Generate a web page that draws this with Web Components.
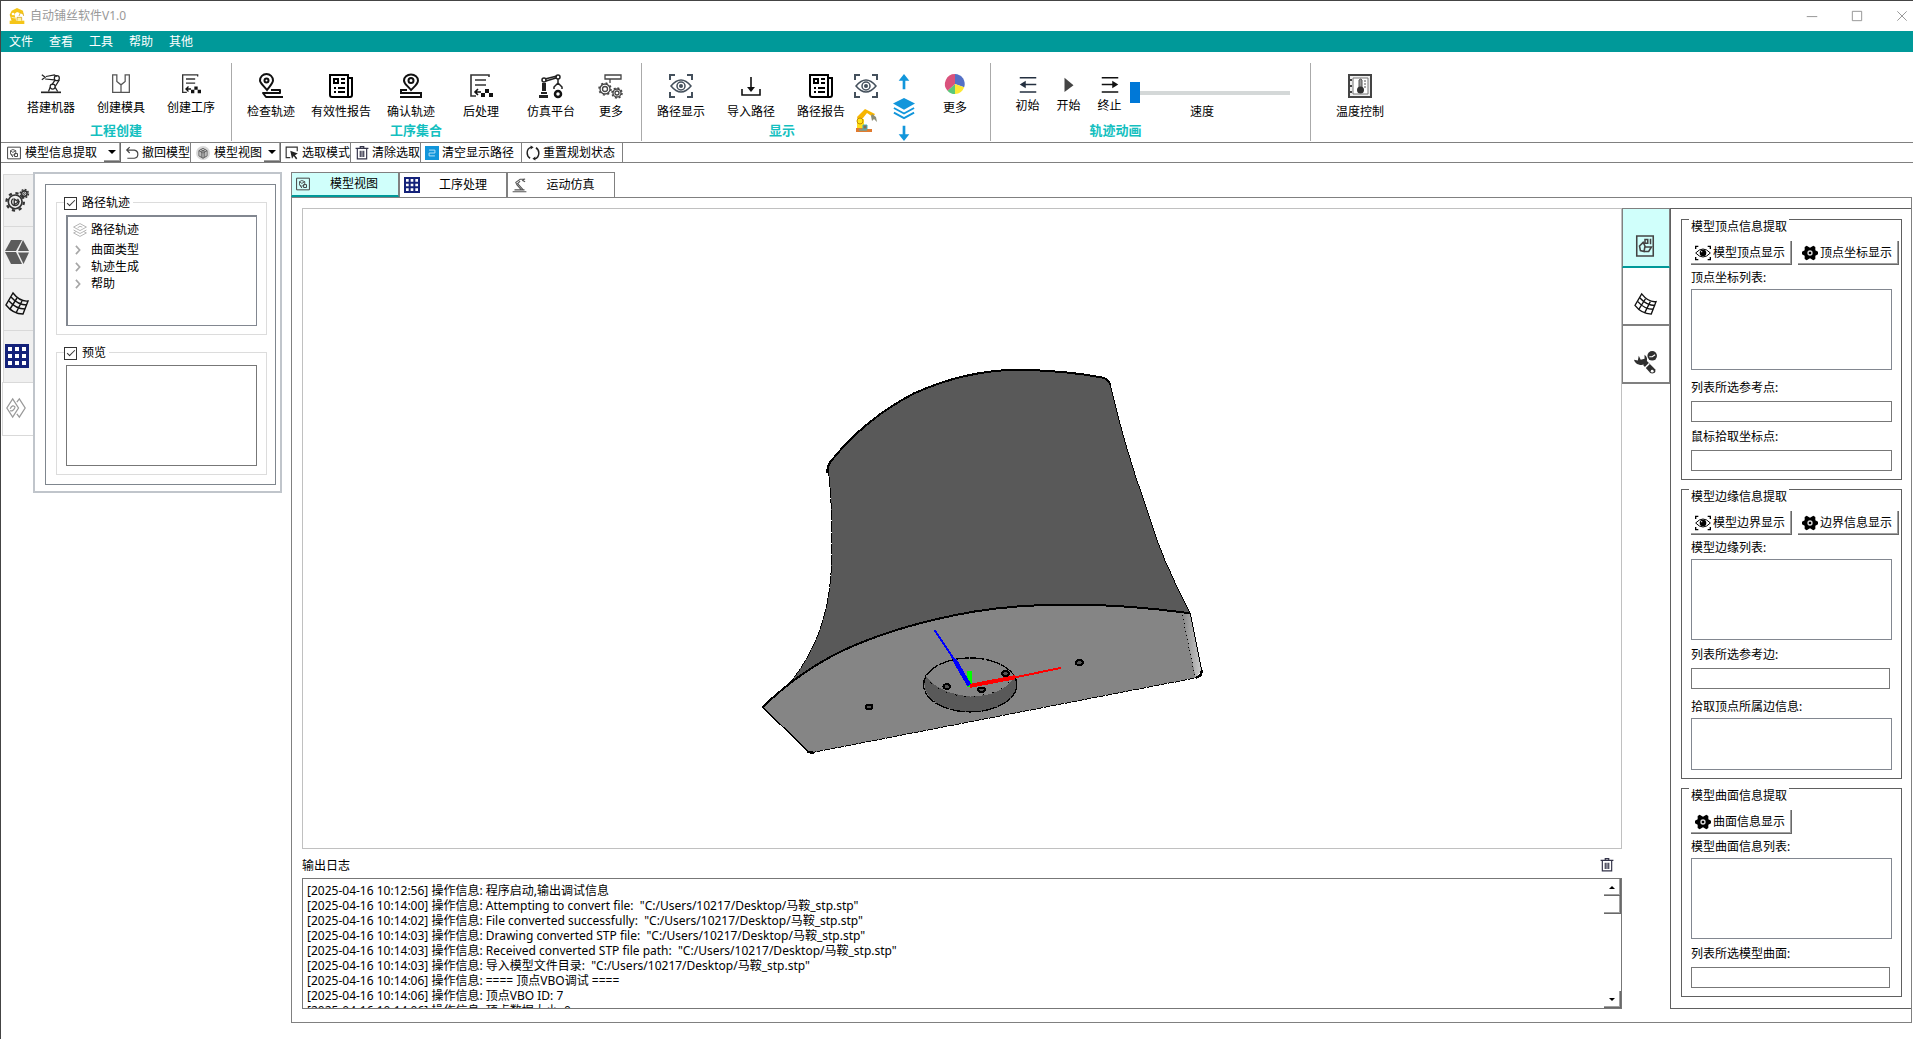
<!DOCTYPE html>
<html lang="zh-CN">
<head>
<meta charset="utf-8">
<title>自动铺丝软件V1.0</title>
<style>
html, body {
  margin: 0;
  height: 100%;
}
body {
  font-family: "Noto Sans", "Noto Sans CJK SC", sans-serif;
  font-size: 12px;
  line-height: 16px;
  color: #000;
  background: #fff;
}
</style>
</head>
<body>
<app-window></app-window>

<script>
// every icon is drawn on a 24 x 24 grid
const ICONS = {
  logo: `<g fill="#f5c518"><path d="M1 19h22v5H1z"/><path d="M4 20L1 10l3-6 8-4 9 4 1 6-5-2-5-2-4 3 3 11z"/></g><path d="M12 19v-5h7v5M17 7l-2 5M21 8l1 4" fill="#fff3a0" stroke="#c8960c"/><circle cx="6" cy="9" r="2" fill="#fff"/><path d="M4 14l5 1" stroke="#fff"/>`,
  robot: `<g fill="none" stroke="#222" stroke-width="1.500"><path d="M1 1l4 3-4 3M6 3l10-2 3 2M5 6l11 1"/><circle cx="19" cy="5" r="3"/><path d="M17 7l-4 6M22 7l-5 8"/><circle cx="14" cy="15" r="3"/><path d="M11 16l-2 5M17 16l3 5"/></g><path d="M0 21h24v2H0z" fill="#222"/>`,
  mold: `<g fill="none" stroke="#555" stroke-width="1.500"><path d="M2 1h5v8l5 4 5-4V1h5v21H2zM12 13v9"/></g>`,
  process: `<g fill="none" stroke="#333" stroke-width="1.600"><path d="M20 3V1H2v21h5M6 6h11M6 11h11"/><path d="M6 18h6M9 15l-3 3 3 3" stroke="#111"/></g><path d="M12 19h4v4h-4zM20 19h4v4h-4zM16 15h4v4h-4z" fill="#111"/>`,
  checkpath: `<g fill="none" stroke="#111" stroke-width="2"><path d="M8 16C4 11 1 9 1 6.500a6 6 0 0 1 13 0C14 9 11 12 8 16z"/><circle cx="7.500" cy="6.500" r="2"/><path d="M12 16h9v3H4l3 4h17" stroke-linejoin="round"/></g>`,
  confirmpath: `<g fill="none" stroke="#111" stroke-width="2"><path d="M12 16C8 11 5 10 5 6.500a7 6 0 0 1 14 0C19 10 16 12 12 16z"/><circle cx="12" cy="6.500" r="2.500"/><path d="M8 16H2v3h20v4H1"/></g>`,
  report: `<g fill="none" stroke="#000" stroke-width="2"><path d="M1 1h18v22H3q-2 0-2-2zM19 4h4v17q0 2-2 2h-3"/><path d="M5 5h4v4H5zM12 5h4M12 9h4M5 14h2M9 14h7M5 18h2M9 18h7"/></g>`,
  platform: `<g fill="none" stroke="#222" stroke-width="1.500"><path d="M6 5l12-3M7 7l10-3"/><circle cx="5" cy="6" r="2"/><circle cx="19" cy="3" r="2"/><path d="M19 5v5M19 9l-4 4v2M19 9l4 4v2"/></g><path d="M2 18h6v2H2zM0 21h9v3H0zM3 9h4v8H3z" fill="#222"/><circle cx="19" cy="20" r="3" fill="none" stroke="#111" stroke-width="2.500"/>`,
  more: `<g fill="none" stroke="#444" stroke-width="1.300"><path d="M6 1h16v4H6zM11 5v4"/><circle cx="6" cy="15" r="5"/><circle cx="6" cy="15" r="6" stroke-dasharray="2 2.700" stroke-width="1.500"/><circle cx="6" cy="15" r="2.500"/><circle cx="18" cy="19" r="4"/><circle cx="18" cy="19" r="5" stroke-dasharray="2 1.900" stroke-width="1.500"/><circle cx="18" cy="19" r="2"/></g>`,
  eye: `<g fill="none" stroke="#44505c" stroke-width="1.500"><path d="M1 6V1h5M18 1h5v5M23 18v5h-5M6 23H1v-5" stroke-width="2"/><path d="M2 12q10-12 20 0-10 12-20 0z"/><circle cx="12" cy="12" r="4"/></g><circle cx="12" cy="12" r="2" fill="#44505c"/>`,
  eyedark: `<g fill="none" stroke="#000" stroke-width="2"><path d="M1 6V2h4M19 2h4v4M23 18v4h-4M5 22H1v-4"/><path d="M1 12q11-12 22 0-11 12-22 0z" stroke-width="1.500"/></g><circle cx="12" cy="12" r="5"/><circle cx="10" cy="10" r="1" fill="#fff"/>`,
  importpath: `<path d="M12 3v13M3 15v6h18v-6" fill="none" stroke="#111" stroke-width="1.600"/><path d="M8 13h8l-4 5z" fill="#111"/>`,
  arm: `<path d="M4 12L3 9l8-8 2 1 8 4-2 3-6-4-4 5z" fill="#f7b500"/><path d="M3 11h7v9H3z" fill="#ffdf1a"/><circle cx="6" cy="13" r="3" fill="#ffe619" stroke="#c78a00"/><path d="M18 6l4 3 1 5-3-3-2 2-1-5z" fill="#8b8d78"/><path d="M2 20h9v1h7v3H2z" fill="#e07b2f"/><path d="M9 17h4v4H9zM5 22h8" fill="#8c6b50" stroke="#3fb1c4"/>`,
  up: `<path d="M12 0l8 10h-6v13h-4V10H4z" fill="#1296db"/>`,
  down: `<path d="M12 24l8-10h-6V1h-4v13H4z" fill="#1296db"/>`,
  layers: `<path d="M12 1l12 6-12 7L0 7z" fill="#1296db"/><path d="M1 12l11 6 11-6M1 17l11 6 11-6" fill="none" stroke="#1296db" stroke-width="2"/>`,
  pie: `<path d="M12 12V0a12 12 0 0 1 11 16z" fill="#5470c6"/><path d="M12 12l11 4a12 12 0 0 1-11 8z" fill="#fde833"/><path d="M12 12v12a12 12 0 0 1-9-4z" fill="#5bc878"/><path d="M12 12l-9 8A12 12 0 0 1 12 0z" fill="#d9527c"/>`,
  first: `<path d="M1 5h22M8 14h15M1 24h22" stroke="#243040" stroke-width="2" fill="none"/><path d="M9 9v10l-8-5z" fill="#243040"/>`,
  play: `<path d="M6 5l12 10L6 24z" fill="#444"/>`,
  last: `<path d="M1 5h22M1 14h15M1 24h22" stroke="#111" stroke-width="2" fill="none"/><path d="M15 9v10l8-5z" fill="#111"/>`,
  thermo: `<path d="M1 1h22v22H1z" fill="#eee" stroke="#444" stroke-width="2"/><path d="M5 4h15v16H5z" fill="#fff" stroke="#777"/><path d="M1 6h3M1 12h3M1 18h3" stroke="#444" stroke-width="2"/><path d="M11 6q2-2 3 0v8h-3zM16 7h2M16 10h2M16 13h2" fill="#999" stroke="#555"/><circle cx="12.500" cy="16" r="3.500" fill="#333"/>`,
  model: `<path d="M1 2h22v20H1z" fill="none" stroke="#444" stroke-width="1.700"/><path d="M10 6l5 2v5l-5 3-4-3V8zM10 11l5-3M10 11L6 8" fill="none" stroke="#444" stroke-width="1.500"/><path d="M13 13h5v5h-5zM6 13l4 6" fill="none" stroke="#444" stroke-width="1.700"/>`,
  undo: `<path d="M8 2L3 7l5 5M3 7h13q6 1 6 7t-6 7H4" fill="none" stroke="#444" stroke-width="2"/>`,
  cubegray: `<circle cx="12" cy="12" r="12" fill="#d9d9d9"/><path d="M12 4l7 4v9l-7 4-7-4V8zM5 8l7 4 7-4M12 12v9M8 6l7 4v9M16 6l-7 4v9" fill="none" stroke="#555" stroke-width="1.500"/>`,
  select: `<path d="M9 20H2V2h19v7" fill="none" stroke="#333" stroke-width="2"/><path d="M9 8l13 5-5 3 4 5-2 2-4-6-3 5z" fill="#222"/>`,
  trash: `<path d="M1 4h22M9 4V1h6v3M4 4v18h16V4M9 8v11M12 8v11M15 8v11" fill="none" stroke="#333348" stroke-width="2"/>`,
  clear: `<path d="M0 0h24v24H0z" fill="#1296db"/><path d="M7 7h10v5H7v5h10" fill="none" stroke="#bfe6fa" stroke-width="1.600"/>`,
  refresh: `<path d="M9 2Q2 4 2 12q0 6 5 9M15 22q7-2 7-10 0-6-5-9" fill="none" stroke="#222" stroke-width="2.500"/><path d="M8-1l5 3-5 4zM16 25l-5-3 5-4z" fill="#222"/>`,
  gears: `<g fill="none" stroke="#333"><circle cx="10" cy="14" r="7.500" stroke-width="1.800"/><circle cx="10" cy="14" r="9.500" stroke-width="2.500" stroke-dasharray="3.460 4"/><circle cx="10" cy="14" r="4" stroke-width="1.500" stroke-dasharray="16 5"/><path d="M9 11l5 3-5 3z" stroke-width="1.500"/><circle cx="20" cy="5" r="4.500" stroke-width="1.600" stroke-dasharray="2 1.500"/><circle cx="20" cy="5" r="3" stroke-width="1.800"/><circle cx="20" cy="5" r="1"/></g>`,
  cube: `<g fill="#5c5c5c"><path d="M6 0h11l-6 11H0z"/><path d="M18 0l6 11-11 0z"/><path d="M0 12h11l6 12H6z"/><path d="M13 12.500h11L18.500 24z"/></g>`,
  mesh: `<g fill="none" stroke="#111" stroke-width="1.400"><path d="M8 1Q15 10 23 9L18 22Q8 22 1 13z"/><path d="M6 5q7 8 16 8M4 9q7 8 16 8M12 6L5 17M17 9L11 21"/></g>`,
  grid: `<path d="M0 0h24v24H0z" fill="#14227a"/><path d="M3 3h4v4H3zM10 3h4v4h-4zM17 3h4v4h-4zM3 10h4v4H3zM10 10h4v4h-4zM17 10h4v4h-4zM3 17h4v4H3zM10 17h4v4h-4zM17 17h4v4h-4z" fill="#fff"/>`,
  diamonds: `<g fill="none" stroke="#999" stroke-width="1.500"><path d="M8 1l7 11-7 11L1 12zM13 5l3-4 7 11-7 11-3-4"/><path d="M5 13q3-6 6-2M5 15q3 2 6-4"/></g>`,
  stack: `<g fill="none" stroke="#aaa" stroke-width="1.500"><path d="M12 1l11 6-11 6L1 7zM1 12l11 6 11-6M5 15l-4 2 11 6 11-6-4-2"/><path d="M8 8q4-4 8-1"/></g>`,
  motion: `<g fill="none" stroke="#555" stroke-width="1.700"><path d="M21 2h-8L6 7l2 4 7 8M13 5l-4 4 9 10M20 1l-3 3 4 2M1 22h22M4 19h16"/></g>`,
  parts: `<g fill="none" stroke="#444" stroke-width="1.700"><path d="M3 1h18v22H3z"/><path d="M6 12l4-4 2 4-1 6-4-1zM11 13h8l-3 5h-6M12 5h3v4h-3zM18 4v6"/></g>`,
  wrench: `<path d="M5 5l2 4 4-1V4q4 3 2 8-4 4-8 2Q1 13 0 9l4 1z" fill="#2f2f2f"/><path d="M10 13l3-3 9 9q1 3-1 4t-4 0l-7-8z" fill="#2f2f2f"/><path d="M11 18l5-5" stroke="#fff" stroke-width="1.500"/><circle cx="19" cy="5" r="5" fill="#2f2f2f"/><path d="M16 6h3l3-2" stroke="#fff" stroke-width="1.300" fill="none"/><circle cx="19" cy="21" r="1.500" fill="#fff"/>`,
  cog: `<path d="M7 1l5 3 5-3 3 2 0 5 4 2v4l-4 2v5l-3 2-5-3-5 3-3-2v-5l-4-2v-4l4-2V3z"/><circle cx="12" cy="12" r="3" fill="none" stroke="#ddd" stroke-width="2"/>`,
  chevron: `<path d="M7 2l9 10-9 10" fill="none" stroke="#a6a6a6" stroke-width="4"/>`,
  min: `<path d="M3 13h18" stroke="#8a8a8a" stroke-width="1.500"/>`,
  max: `<path d="M4 4h16v16H4z" fill="none" stroke="#8a8a8a" stroke-width="1.500"/>`,
  close: `<path d="M4 4l16 16M20 4L4 20" stroke="#8a8a8a" stroke-width="1.500"/>`
};

const define = (tag, render) => {
  customElements.define(tag, class extends HTMLElement {
    connectedCallback() {
      if (this.shadowRoot) return;
      const template = document.createElement('template');
      template.innerHTML = render(this);
      this.attachShadow({ mode: 'open' }).appendChild(template.content.cloneNode(true));
    }
  });
};

const attr = (el, name, fallback = '') => el.getAttribute(name) || fallback;

define('ui-icon', el => {
  const size = attr(el, 'size', '24');
  return `
<style>
:host { display: block; flex: none; width: ${size}px; height: ${size}px; }
svg { display: block; overflow: visible; }
</style>
<svg width="${size}" height="${size}" viewBox="0 0 24 24" aria-hidden="true">${ICONS[attr(el, 'name')]}</svg>`;
});

define('title-bar', () => `
<style>
:host { display: flex; align-items: center; height: 30px; padding-left: 8px; color: #999; }
span { flex: 1; padding-left: 5px; }
button { display: grid; place-items: center; width: 45px; height: 30px; padding: 0; border: 0; background: none; }
button:last-child { width: 34px; padding-left: 12px; }
</style>
<ui-icon name="logo" size="16"></ui-icon>
<span>自动铺丝软件V1.0</span>
<button aria-label="最小化"><ui-icon name="min" size="14"></ui-icon></button>
<button aria-label="最大化"><ui-icon name="max" size="14"></ui-icon></button>
<button aria-label="关闭"><ui-icon name="close" size="14"></ui-icon></button>`);

define('menu-bar', () => `
<style>
:host { display: flex; height: 21px; background: #009999; }
button { padding: 0 8px; border: 0; background: none; color: #fff; font: inherit; }
</style>
${['文件', '查看', '工具', '帮助', '其他'].map(t => `<button>${t}</button>`).join('')}`);

define('ribbon-button', el => `
<style>
:host { display: block; flex: none; width: var(--w, 70px); }
button {
  display: flex; flex-direction: column; align-items: center; gap: 6px;
  width: 100%; padding: 0; border: 0; background: none; font: inherit; color: inherit; white-space: nowrap;
}
</style>
<button><ui-icon name="${attr(el, 'icon')}" size="${attr(el, 'size', '24')}"></ui-icon>${attr(el, 'label')}</button>`);

define('ribbon-group', el => `
<style>
:host { display: flex; flex-direction: column; box-sizing: border-box; height: 78px; padding: 11px 5px 0 4px; border-right: 1px solid #aaa; }
:host(:last-child) { border: 0; }
.items { display: flex; height: 48px; }
.title { text-align: center; font-weight: bold; font-size: 13px; color: #14bfbf; padding-right: var(--inset, 0); }
</style>
<div class="items"><slot></slot></div>
<div class="title">${attr(el, 'label')}</div>`);

define('ribbon-bar', () => `
<style>
:host { display: flex; padding-top: 11px; height: 79px; }
.first { --inset: 10px; padding-left: 15px; }
.sets { --inset: 40px; }
.show { --inset: 62px; padding-right: 10px; }
.anim { --inset: 66px; padding: 11px 20px 0 16px; }
.temp { padding-left: 14px; }
.stack { display: flex; flex-direction: column; flex: none; align-items: center; height: 67px; }
.stack button { padding: 0; border: 0; background: none; }
.eyes { width: 20px; gap: 10px; margin-right: 16px; }
.arrows { width: 24px; justify-content: space-between; margin-right: 14px; }
.narrow { --w: 50px; }
.play { --w: 41px; }
.speed { display: flex; flex-direction: column; align-items: center; gap: 1px; width: 160px; padding-top: 8px; }
label { padding-right: 16px; }
input { appearance: none; width: 160px; height: 21px; margin: 0; background: linear-gradient(#d4d8d8, #d4d8d8) center / 100% 4px no-repeat; }
input::-webkit-slider-thumb { appearance: none; width: 10px; height: 21px; background: #0078d7; }
</style>
<ribbon-group class="first" label="工程创建">
  <ribbon-button icon="robot" size="20" label="搭建机器"></ribbon-button>
  <ribbon-button icon="mold" size="20" label="创建模具"></ribbon-button>
  <ribbon-button icon="process" size="20" label="创建工序"></ribbon-button>
</ribbon-group>
<ribbon-group class="sets" label="工序集合">
  <ribbon-button icon="checkpath" label="检查轨迹"></ribbon-button>
  <ribbon-button icon="report" label="有效性报告"></ribbon-button>
  <ribbon-button icon="confirmpath" label="确认轨迹"></ribbon-button>
  <ribbon-button icon="process" label="后处理"></ribbon-button>
  <ribbon-button icon="platform" label="仿真平台"></ribbon-button>
  <ribbon-button class="narrow" icon="more" label="更多"></ribbon-button>
</ribbon-group>
<ribbon-group class="show" label="显示">
  <ribbon-button icon="eye" label="路径显示"></ribbon-button>
  <ribbon-button icon="importpath" label="导入路径"></ribbon-button>
  <ribbon-button icon="report" label="路径报告"></ribbon-button>
  <div class="stack eyes">
    <button aria-label="视图"><ui-icon name="eye" size="24"></ui-icon></button>
    <button aria-label="机器人"><ui-icon name="arm" size="24"></ui-icon></button>
  </div>
  <div class="stack arrows">
    <button aria-label="上移"><ui-icon name="up" size="16"></ui-icon></button>
    <button aria-label="图层"><ui-icon name="layers" size="22"></ui-icon></button>
    <button aria-label="下移"><ui-icon name="down" size="16"></ui-icon></button>
  </div>
  <ribbon-button class="narrow" icon="pie" size="20" label="更多"></ribbon-button>
</ribbon-group>
<ribbon-group class="anim" label="轨迹动画">
  <ribbon-button class="play" icon="first" size="18" label="初始"></ribbon-button>
  <ribbon-button class="play" icon="play" size="18" label="开始"></ribbon-button>
  <ribbon-button class="play" icon="last" size="18" label="终止"></ribbon-button>
  <div class="speed">
    <input id="speed" type="range" value="0">
    <label for="speed">速度</label>
  </div>
</ribbon-group>
<ribbon-group class="temp">
  <ribbon-button icon="thermo" label="温度控制"></ribbon-button>
</ribbon-group>`);

define('strip-button', el => `
<style>
:host { display: flex; }
button {
  display: flex; align-items: center; gap: 3px; padding: 0 var(--end, 0) 0 4px;
  border: 0; border-right: 1px solid #808080; background: none; font: inherit; white-space: nowrap;
}
:host([drop]) button { gap: 4px; border: 0; padding: 0 var(--end, 2px) 0 5px; }
.drop {
  display: grid; place-items: center; width: 17px; box-sizing: border-box;
  border: solid #696969; border-width: 0 1px 1px 0; box-shadow: inset -1px -1px #a0a0a0;
}
.drop::before { content: ""; border: solid transparent; border-width: 4px 4px 0; border-top-color: #000; }
</style>
<button><ui-icon name="${attr(el, 'icon')}" size="14"></ui-icon>${attr(el, 'label')}</button>
${el.hasAttribute('drop') ? '<span class="drop"></span>' : ''}`);

define('tool-strip', () => `
<style>
:host { display: flex; height: 19px; padding-left: 1px; border: solid #808080; border-width: 1px 0; }
.wide { --end: 7px; }
</style>
<strip-button class="wide" icon="model" label="模型信息提取" drop></strip-button>
<strip-button icon="undo" label="撤回模型"></strip-button>
<strip-button icon="cubegray" label="模型视图" drop></strip-button>
<strip-button icon="select" label="选取模式"></strip-button>
<strip-button icon="trash" label="清除选取"></strip-button>
<strip-button class="wide" icon="clear" label="清空显示路径"></strip-button>
<strip-button class="wide" icon="refresh" label="重置规划状态"></strip-button>`);

define('check-group', el => `
<style>
:host { display: block; border: 1px solid #dcdcdc; padding: 0 9px 8px; }
label { display: flex; align-items: center; gap: 5px; width: max-content; height: 16px; margin: -8px 0 4px -2px; padding-right: 3px; background: #fff; }
input { appearance: none; display: grid; place-items: center; box-sizing: border-box; width: 13px; height: 13px; margin: 0; border: 1px solid #333; }
input:checked::before { content: ""; width: 7px; height: 3px; margin-bottom: 3px; border: solid #333; border-width: 0 0 1px 1px; transform: rotate(-45deg); }
</style>
<label><input type="checkbox" checked>${attr(el, 'label')}</label>
<slot></slot>`);

define('path-panel', () => `
<style>
:host { display: flex; align-items: flex-start; padding: 9px 0 0 1px; }
nav { display: flex; flex-direction: column; width: 31px; padding-top: 2px; }
nav button {
  display: grid; place-items: center; height: 52px; margin-left: 1px; padding: 0 4px 2px 0; box-sizing: border-box;
  background: #f0f0f0; border: solid #d9d9d9; border-width: 1px 0 0 1px;
}
nav button.on { height: 54px; margin-left: 0; background: #fff; border-bottom-width: 1px; }
.panel { width: 249px; box-sizing: border-box; padding: 10px 4px 6px 10px; border: 2px solid #c0c5cb; }
.inner { border: 1px solid #7f868e; padding: 17px 8px 9px 10px; }
check-group + check-group { margin-top: 17px; }
ul { list-style: none; margin: 0; padding: 3px 5px 6px; height: 99px; border: solid #828790; border-width: 2px 1px 1px 2px; }
li { display: flex; align-items: center; gap: 4px; height: 17px; }
li:first-child { height: 20px; padding-bottom: 1px; }
li ui-icon { width: 14px; }
textarea { display: block; box-sizing: border-box; width: 100%; height: 101px; margin: 0; border: 1px solid #777; resize: none; }
</style>
<nav>
  <button aria-label="设置"><ui-icon name="gears" size="22"></ui-icon></button>
  <button aria-label="模型"><ui-icon name="cube" size="24"></ui-icon></button>
  <button aria-label="曲面"><ui-icon name="mesh" size="24"></ui-icon></button>
  <button aria-label="网格"><ui-icon name="grid" size="24"></ui-icon></button>
  <button class="on" aria-label="轨迹"><ui-icon name="diamonds" size="20"></ui-icon></button>
</nav>
<div class="panel"><div class="inner">
  <check-group label="路径轨迹">
    <ul>
      <li><ui-icon name="stack" size="14"></ui-icon>路径轨迹</li>
      <li><ui-icon name="chevron" size="10"></ui-icon>曲面类型</li>
      <li><ui-icon name="chevron" size="10"></ui-icon>轨迹生成</li>
      <li><ui-icon name="chevron" size="10"></ui-icon>帮助</li>
    </ul>
  </check-group>
  <check-group label="预览"><textarea aria-label="预览" readonly></textarea></check-group>
</div></div>`);

define('view-tabs', () => `
<style>
:host { display: flex; height: 25px; }
button {
  display: flex; align-items: center; width: 108px; box-sizing: border-box; padding: 0 0 0 4px;
  border: 1px solid #808080; border-bottom: 0; background: #fff; font: inherit;
}
span { flex: 1; text-align: center; }
button.on { background: #d0fffb; border-bottom: 2px solid #009999; }
</style>
<button class="on"><ui-icon name="model" size="14"></ui-icon><span>模型视图</span></button>
<button><ui-icon name="grid" size="16"></ui-icon><span>工序处理</span></button>
<button><ui-icon name="motion" size="15"></ui-icon><span>运动仿真</span></button>`);

define('model-view', () => `
<style>
:host { display: block; min-height: 0; border: 1px solid #c0c0c0; }
svg { display: block; width: 100%; height: 100%; }
</style>
<svg viewBox="-1314 -423 3957 1917" shape-rendering="crispEdges" fill="none" stroke="#000" stroke-width="4" role="img" aria-label="模型">
  <defs>
    <linearGradient id="edge"><stop offset="0" stop-color="#858585"/><stop offset="1" stop-color="#ccc"/></linearGradient>
  </defs>
  <!-- saddle surface -->
  <path fill="#595959" stroke="none" d="M262 350L272 332Q375 205 520 130Q680 58 840 59Q980 62 1085 82Q1105 88 1110 105Q1152 290 1215 465Q1275 655 1350 790L1300 830 690 900 148 998Q245 880 266 720Q277 640 273 520Q272 430 262 350z"/>
  <!-- base plate -->
  <path fill="#858585" stroke="none" d="M66 1072Q170 970 300 905Q470 825 700 785Q980 740 1350 790L1384 962 1366 984 210 1209z"/>
  <path fill="url(#edge)" stroke="none" d="M1326 790l26 2 32 170-18 22z"/>
  <path stroke-width="6" d="M260 368Q260 346 272 332Q375 205 520 130Q680 58 840 59Q980 62 1085 82Q1105 88 1110 105M66 1072Q170 970 300 905Q470 825 700 785Q980 740 1350 790"/>
  <path stroke-width="3" d="M1110 105Q1152 290 1215 465Q1275 655 1350 790L1384 962"/>
  <path stroke-width="3" stroke-dasharray="30 3" d="M262 350Q272 430 273 520Q277 640 266 720Q245 880 148 998"/>
  <path d="M66 1072l138 134"/>
  <path stroke-width="3" stroke-dasharray="18 3" d="M210 1209L1366 984"/>
  <path stroke-width="7" d="M198 1206l22 3M1366 984q20-5 18-24"/>
  <path stroke-width="3" stroke-dasharray="3 9" d="M1326 796l38 184"/>
  <!-- boss -->
  <path fill="#595959" stroke="none" d="M554 975Q540 1030 590 1060Q640 1086 690 1086Q770 1086 812 1046Q836 1015 824 978Q790 1038 690 1040Q590 1030 554 975z"/>
  <ellipse cx="689" cy="1005" rx="140" ry="81" stroke-dasharray="44 4"/>
  <path stroke-width="3" stroke-dasharray="4 24" d="M554 975Q590 1038 690 1040Q780 1035 815 985"/>
  <g fill="#555" stroke-width="6">
    <ellipse cx="386" cy="1071" rx="10" ry="7"/><ellipse cx="619" cy="1010" rx="10" ry="7"/>
    <ellipse cx="723" cy="1020" rx="10" ry="7"/><ellipse cx="795" cy="971" rx="10" ry="7"/>
    <ellipse cx="1017" cy="938" rx="11" ry="7"/>
  </g>
  <!-- axes -->
  <path stroke="#0f0" stroke-width="15" d="M688 1010v-47"/>
  <path stroke="#f00" stroke-width="12" d="M688 1008l136-26"/>
  <path stroke="#f00" stroke-width="6" d="M820 983l142-29"/>
  <path stroke="#00f" stroke-width="13" d="M686 1006l-44-76"/>
  <path stroke="#00f" stroke-width="6" d="M644 934l-62-94"/>
</svg>`);

const FILE = '"C:/Users/10217/Desktop/马鞍_stp.stp"';
const LOG = [
  ['10:12:56', '程序启动,输出调试信息'],
  ['10:14:00', 'Attempting to convert file:  ' + FILE],
  ['10:14:02', 'File converted successfully:  ' + FILE],
  ['10:14:03', 'Drawing converted STP file:  ' + FILE],
  ['10:14:03', 'Received converted STP file path:  ' + FILE],
  ['10:14:03', '导入模型文件目录:  ' + FILE],
  ['10:14:06', '==== 顶点VBO调试 ===='],
  ['10:14:06', '顶点VBO ID: 7'],
  ['10:14:06', '顶点数据大小: 0']
];

define('log-panel', () => `
<style>
:host { display: block; }
header { display: flex; align-items: center; justify-content: space-between; height: 29px; padding: 0 8px 0 0; }
header button { padding: 2px 0 0; border: 0; background: none; }
header span { padding-top: 5px; }
.box { display: flex; height: 129px; border: 1px solid #777; }
.lines { flex: 1; overflow: hidden; padding: 4px 4px 0; white-space: pre; line-height: 15px; box-sizing: border-box; }
.bar { display: flex; flex-direction: column; width: 17px; }
.bar button {
  display: grid; place-items: center; height: 17px; padding: 0; background: #fff;
  border: solid #696969; border-width: 0 1px 1px 0; box-shadow: inset -1px -1px #a0a0a0;
}
.bar button::before { content: ""; border: solid transparent; border-width: 0 3px 3px; border-bottom-color: #000; }
.bar button:last-child { margin-top: auto; }
.bar button:last-child::before { border-width: 3px 3px 0; border-top-color: #000; }
.bar button.thumb { height: 18px; }
.bar button.thumb::before { display: none; }
</style>
<header><span>输出日志</span><button aria-label="清空日志"><ui-icon name="trash" size="14"></ui-icon></button></header>
<div class="box">
  <div class="lines" role="log">${LOG.map(([time, text]) => `<div>[2025-04-16 ${time}] 操作信息: ${text}</div>`).join('')}</div>
  <div class="bar"><button aria-label="向上"></button><button class="thumb" aria-label="滚动"></button><button aria-label="向下"></button></div>
</div>`);

define('push-button', el => `
<style>
:host { display: block; }
button {
  display: flex; align-items: center; gap: 2px; width: 101px; height: 24px; padding: 0 0 0 4px;
  background: #fff; border: solid #696969; border-width: 0 1px 1px 0; box-shadow: inset -1px -1px #a0a0a0;
  font: inherit; white-space: nowrap;
}
</style>
<button><ui-icon name="${attr(el, 'icon')}" size="16"></ui-icon>${attr(el, 'label')}</button>`);

define('field-row', el => {
  const rows = attr(el, 'height');
  return `
<style>
:host { display: block; margin-right: 9px; }
label { display: block; }
input, textarea { display: block; box-sizing: border-box; width: 100%; margin: 5px 0 0; padding: 0 4px; border: 1px solid #777; resize: none; font: inherit; }
input { height: 21px; }
textarea { height: ${rows}px; margin-top: 3px; border-color: #828790; }
:host([short]) input { width: calc(100% - 2px); }
</style>
<label for="field">${attr(el, 'label')}</label>
${rows ? '<textarea id="field" readonly></textarea>' : '<input id="field" type="text">'}`;
});

define('group-box', el => `
<style>
:host { display: flex; flex-direction: column; border: 1px solid #606060; padding: 0 0 8px 9px; }
h2 { width: max-content; margin: -1px 0 0 -2px; padding: 0 2px; background: #fff; font: inherit; }
.buttons { display: flex; gap: 6px; margin: 6px 0 5px; }
</style>
<h2>${attr(el, 'label')}</h2>
<div class="buttons"><slot name="button"></slot></div>
<slot></slot>`);

define('info-panel', () => `
<style>
:host { display: flex; }
nav { display: flex; flex-direction: column; width: 48px; }
nav button {
  display: grid; place-items: center; height: 58px; padding: 17px 2px 0 0; box-sizing: border-box;
  background: #fff; border: solid #808080; border-width: 0 1px 2px 1px;
}
nav button.on { height: 60px; background: #d0fffb; border-top-width: 1px; border-bottom-color: #009999; }
.panel { display: flex; flex-direction: column; gap: 9px; flex: 1; padding: 10px 9px 8px 10px; border: solid #606060; border-width: 1px 0 1px 1px; }
.gap { margin-top: 10px; }
.tight { margin-top: 7px; }
</style>
<nav>
  <button class="on" aria-label="模型信息"><ui-icon name="parts" size="22"></ui-icon></button>
  <button aria-label="曲面信息"><ui-icon name="mesh" size="23"></ui-icon></button>
  <button aria-label="工具"><ui-icon name="wrench" size="23"></ui-icon></button>
</nav>
<div class="panel">
  <group-box label="模型顶点信息提取">
    <push-button slot="button" icon="eyedark" label="模型顶点显示"></push-button>
    <push-button slot="button" icon="cog" label="顶点坐标显示"></push-button>
    <field-row label="顶点坐标列表:" height="81"></field-row>
    <field-row class="gap" label="列表所选参考点:"></field-row>
    <field-row class="tight" label="鼠标拾取坐标点:"></field-row>
  </group-box>
  <group-box label="模型边缘信息提取">
    <push-button slot="button" icon="eyedark" label="模型边界显示"></push-button>
    <push-button slot="button" icon="cog" label="边界信息显示"></push-button>
    <field-row label="模型边缘列表:" height="81"></field-row>
    <field-row class="tight" short label="列表所选参考边:"></field-row>
    <field-row class="gap" label="拾取顶点所属边信息:" height="52"></field-row>
  </group-box>
  <group-box label="模型曲面信息提取">
    <push-button slot="button" icon="cog" label="曲面信息显示"></push-button>
    <field-row label="模型曲面信息列表:" height="81"></field-row>
    <field-row class="tight" short label="列表所选模型曲面:"></field-row>
  </group-box>
</div>`);

define('app-window', () => `
<style>
:host { display: flex; flex-direction: column; min-height: 100vh; box-sizing: border-box; border: solid #444; border-width: 1px 0 0 1px; }
main { display: flex; flex: 1; gap: 9px; padding: 0 1px 16px 0; }
.work { display: flex; flex-direction: column; flex: 1; min-width: 0; padding-top: 9px; }
.pane { display: flex; flex: 1; border: 1px solid #808080; padding: 10px 0 13px 10px; }
.center { display: flex; flex-direction: column; flex: 1; min-width: 0; }
model-view { flex: 1; }
info-panel { flex: none; width: 289px; }
</style>
<title-bar></title-bar>
<menu-bar></menu-bar>
<ribbon-bar></ribbon-bar>
<tool-strip></tool-strip>
<main>
  <path-panel></path-panel>
  <div class="work">
    <view-tabs></view-tabs>
    <div class="pane">
      <div class="center"><model-view></model-view><log-panel></log-panel></div>
      <info-panel></info-panel>
    </div>
  </div>
</main>`);
</script>
</body>
</html>
